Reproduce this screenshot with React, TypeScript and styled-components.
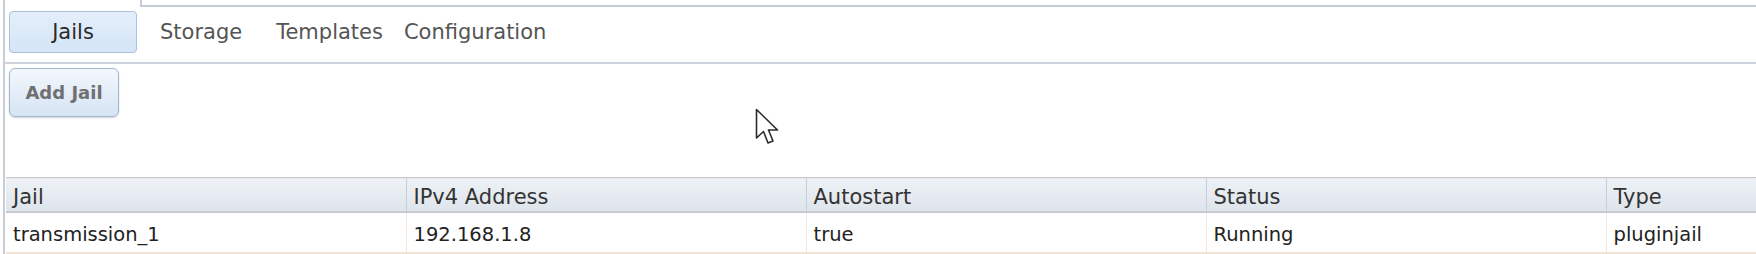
import React from 'react'
import styled, { createGlobalStyle } from 'styled-components'

const GlobalStyle = createGlobalStyle`
  html, body {
    margin: 0;
    padding: 0;
    background: #ffffff;
  }
  body {
    font-family: "DejaVu Sans", Verdana, sans-serif;
  }
  #root {
    height: 254px;
    overflow: hidden;
  }
`;

const columns = ['Jail', 'IPv4 Address', 'Autostart', 'Status', 'Type'];
const rows = [['transmission_1', '192.168.1.8', 'true', 'Running', 'pluginjail']];
const tabs = [
  { label: 'Jails', lead: 0 },
  { label: 'Storage', lead: 23 },
  { label: 'Templates', lead: 34 },
  { label: 'Configuration', lead: 21 },
];

const Cursor = () => (
  <CursorMark width="25" height="38" viewBox="0 0 25 38">
    <path
      d="M1.5 1.5 L1.5 30 L8.5 23.5 L13 35 L18 33 L13.5 22 L22.5 22 Z"
      fill="#ffffff"
      stroke="#2b2b2b"
      strokeWidth="1.6"
      strokeLinejoin="round"
    />
  </CursorMark>
);

const App = () => {
  return (
    <Page>
      <GlobalStyle />
      <TopStub />
      <TabBar>
        {tabs.map((t, i) => (
          <Tab key={t.label} $active={i === 0} $lead={t.lead}>{t.label}</Tab>
        ))}
      </TabBar>
      <Toolbar>
        <AddButton>Add Jail</AddButton>
      </Toolbar>
      <Grid>
        <colgroup>
          {columns.map((c) => (
            <col key={c} style={{ width: 400 }} />
          ))}
        </colgroup>
        <thead>
          <tr>
            {columns.map((c) => (
              <HeadCell key={c}>{c}</HeadCell>
            ))}
          </tr>
        </thead>
        <tbody>
          {rows.map((r) => (
            <tr key={r[0]}>
              {r.map((v, i) => (
                <BodyCell key={i}>{v}</BodyCell>
              ))}
            </tr>
          ))}
        </tbody>
      </Grid>
      <Cursor />
    </Page>
  )
}

const Page = styled.div`
  position: relative;
  height: 254px;
  width: 1751px;
  margin-left: 3px;
  border-left: 2px solid #c9ced6;
  overflow: hidden;
`;

const TopStub = styled.div`
  margin-left: 135px;
  height: 5px;
  border-left: 2px solid #c5cbd5;
  border-bottom: 2px solid #c5cbd5;
`;

const TabBar = styled.div`
  display: flex;
  align-items: flex-start;
  padding: 4px 0 0 4px;
  box-sizing: border-box;
  height: 57px;
  border-bottom: 2px solid #cfd4dc;
`;

const Tab = styled.button<{ $active?: boolean; $lead: number }>`
  height: 42px;
  margin-left: ${(p) => p.$lead}px;
  min-width: ${(p) => (p.$active ? '128px' : '0')};
  padding: 0;
  font-family: "DejaVu Sans", Verdana, sans-serif;
  font-size: 21px;
  color: ${(p) => (p.$active ? '#2a2a2a' : '#555555')};
  background: ${(p) => (p.$active ? 'linear-gradient(#e4eefa, #d4e5f7)' : 'transparent')};
  border: ${(p) => (p.$active ? '1px solid #a9c1da' : 'none')};
  border-radius: 4px;
  cursor: pointer;
`;

const Toolbar = styled.div`
  height: 113px;
  box-sizing: border-box;
  padding: 4px 0 0 4px;
`;

const AddButton = styled.button`
  width: 110px;
  height: 49px;
  padding: 0;
  font-family: "DejaVu Sans", Verdana, sans-serif;
  font-size: 18px;
  font-weight: bold;
  color: #707070;
  background: linear-gradient(#f3f7fc, #d5e4f4);
  border: 1px solid #9fb7d2;
  border-radius: 6px;
  box-shadow: 0 1px 2px rgba(0, 0, 0, 0.18);
  cursor: pointer;
`;

const Grid = styled.table`
  margin-left: 1px;
  width: 2000px;
  table-layout: fixed;
  border-collapse: collapse;
  font-size: 19.5px;
`;

const HeadCell = styled.th`
  height: 34px;
  box-sizing: border-box;
  padding: 6px 7px 0;
  text-align: left;
  font-weight: normal;
  font-size: 21px;
  color: #333333;
  background: linear-gradient(#eef2f6, #dde4eb);
  border-top: 1px solid #c8c8c8;
  border-bottom: 2px solid #c7cbd1;
  border-right: 1px solid #c9ced6;
  white-space: nowrap;
`;

const BodyCell = styled.td`
  height: 35px;
  padding: 4px 7px 0;
  color: #222222;
  border-bottom: 2px solid #f3e3d4;
  border-right: 1px solid #f4e6d9;
  white-space: nowrap;
`;

const CursorMark = styled.svg`
  position: absolute;
  left: 750px;
  top: 108px;
`;

export default App
